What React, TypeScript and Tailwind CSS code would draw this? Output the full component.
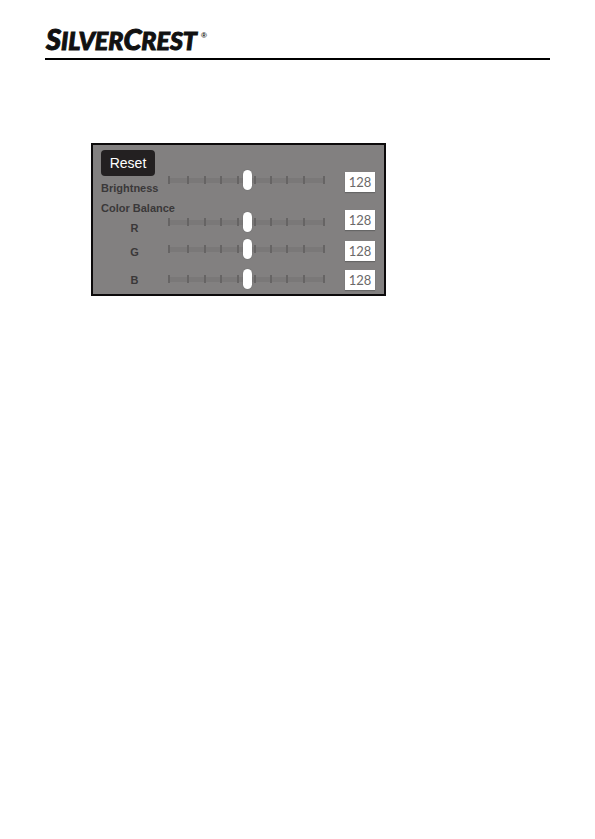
import { useState } from 'react';

const TICKS = [1, 20, 37, 53, 70, 87, 103, 119, 136, 156];

type ChannelProps = { id: string; value: number; onChange: (value: number) => void };

function Slider({ id, value, onChange }: ChannelProps) {
  return (
    <div className="grid h-5 items-center">
      <svg className="col-start-1 row-start-1 h-3 w-full" viewBox="0 0 158 12" preserveAspectRatio="none" aria-hidden="true">
        <rect x="1" y="4" width="156" height="5" fill="#7a7878" />
        {TICKS.map((x) => (
          <rect key={x} x={x - 1} y="2" width="2" height="8" fill="#666464" />
        ))}
      </svg>
      <input
        id={id}
        type="range"
        min={0}
        max={256}
        value={value}
        onChange={(e) => onChange(Number(e.target.value))}
        className="col-start-1 row-start-1 h-5 w-full appearance-none bg-transparent [&::-webkit-slider-thumb]:h-5 [&::-webkit-slider-thumb]:w-[9px] [&::-webkit-slider-thumb]:appearance-none [&::-webkit-slider-thumb]:rounded-full [&::-webkit-slider-thumb]:bg-white [&::-webkit-slider-thumb]:shadow-[0_0_1px_#555]"
      />
    </div>
  );
}

function ValueBox({ id, value, onChange }: ChannelProps) {
  return (
    <input
      aria-label={`${id} value`}
      value={value}
      onChange={(e) => onChange(Number(e.target.value) || 0)}
      className="block h-5 w-full bg-white text-center font-['Lato',sans-serif] text-[13px] leading-5 text-[#6b6969] shadow-[0_1px_1px_#666]"
    />
  );
}

export default function App() {
  const [values, setValues] = useState({ brightness: 128, red: 128, green: 128, blue: 128 });
  const bind = (id: keyof typeof values) => ({
    id,
    value: values[id],
    onChange: (value: number) => setValues((v) => ({ ...v, [id]: value })),
  });

  return (
    <div className="min-h-screen bg-white px-[45px] pt-6 font-['Liberation_Sans',Arial,sans-serif]">
      <header className="flex h-9 items-start border-b-2 border-black">
        <h1 className="flex items-baseline pl-px font-['Lato',sans-serif] text-[25px] leading-[30px] font-black text-[#111] italic [-webkit-text-stroke:1px_#111]">
          <span className="text-[29px]">S</span>ILVER<span className="text-[29px]">C</span>REST
        </h1>
        <span className="ml-1 pt-2 text-[8px] leading-2 font-bold text-[#111]">®</span>
      </header>

      <main className="pt-[83px] pl-[46px]">
        <section className="flex w-full max-w-[295px] border-2 border-[#0c0a0b] bg-[#828080] pr-[9px] pb-1 pl-2">
          <div className="flex w-[67px] flex-col pt-[5px] text-[11px] leading-4 font-bold whitespace-nowrap text-[#3a3839]">
            <button
              type="button"
              onClick={() => setValues({ brightness: 128, red: 128, green: 128, blue: 128 })}
              className="h-[26px] w-[54px] rounded bg-[#232021] text-sm font-normal text-white"
            >
              Reset
            </button>
            <label htmlFor="brightness" className="mt-1">Brightness</label>
            <div className="mt-1">Color Balance</div>
            <label htmlFor="red" className="mt-1 text-center">R</label>
            <label htmlFor="green" className="mt-2 text-center">G</label>
            <label htmlFor="blue" className="mt-3 text-center">B</label>
          </div>
          <div className="flex flex-1 flex-col pt-[25px]">
            <Slider {...bind('brightness')} />
            <div className="mt-[22px]"><Slider {...bind('red')} /></div>
            <div className="mt-[7px]"><Slider {...bind('green')} /></div>
            <div className="mt-[10px]"><Slider {...bind('blue')} /></div>
          </div>
          <div className="ml-[19px] flex w-[30px] flex-col pt-[27px]">
            <ValueBox {...bind('brightness')} />
            <div className="mt-[18px]"><ValueBox {...bind('red')} /></div>
            <div className="mt-[11px]"><ValueBox {...bind('green')} /></div>
            <div className="mt-[9px]"><ValueBox {...bind('blue')} /></div>
          </div>
        </section>
      </main>
    </div>
  );
}
